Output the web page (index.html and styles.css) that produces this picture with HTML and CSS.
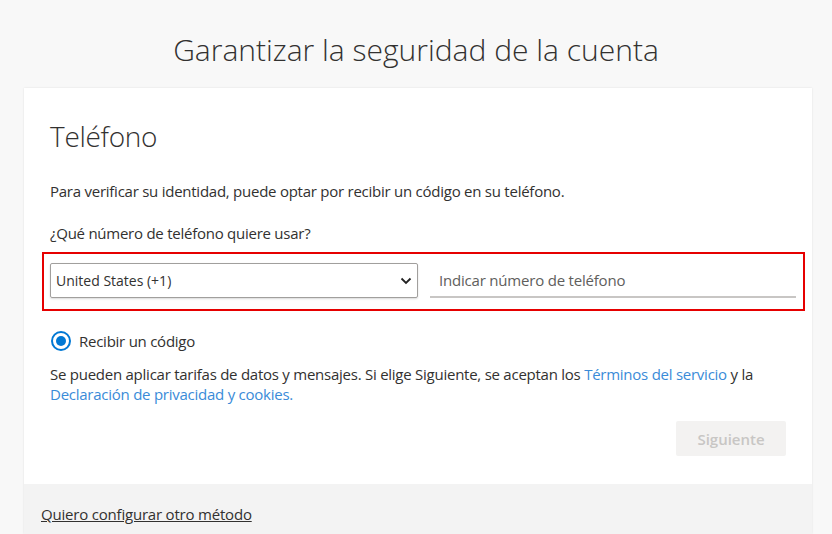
FILE: index.html
```html
<!DOCTYPE html>
<html lang="es">
<head>
<meta charset="utf-8">
<title>Garantizar la seguridad de la cuenta</title>
<link rel="stylesheet" href="styles.css">
</head>
<body>
<h1 class="page-title">Garantizar la seguridad de la cuenta</h1>
<div class="card">
  <div class="card-body">
    <h2 class="section-title">Teléfono</h2>
    <p class="text intro">Para verificar su identidad, puede optar por recibir un código en su teléfono.</p>
    <p class="text question">¿Qué número de teléfono quiere usar?</p>
    <div class="phone-row">
      <div class="select">
        <span>United States (+1)</span>
        <svg class="chevron" width="12" height="8" viewBox="0 0 12 8"><path d="M1.5 1.5 L6 6 L10.5 1.5" fill="none" stroke="#222" stroke-width="1.8"/></svg>
      </div>
      <div class="phone-input">Indicar número de teléfono</div>
    </div>
    <label class="radio-row">
      <span class="radio"><span class="radio-dot"></span></span>
      <span class="text">Recibir un código</span>
    </label>
    <p class="text legal">Se pueden aplicar tarifas de datos y mensajes. Si elige Siguiente, se aceptan los <a class="link">Términos del servicio</a> y la <a class="link">Declaración de privacidad y cookies.</a></p>
    <div class="actions">
      <button class="btn-next" disabled>Siguiente</button>
    </div>
  </div>
  <div class="card-footer">
    <a class="footer-link">Quiero configurar otro método</a>
  </div>
</div>
</body>
</html>
```

FILE: styles.css
```css
html, body {
  margin: 0;
  padding: 0;
  height: 100%;
  overflow: hidden;
}
body {
  background: #f8f8f8;
  font-family: "Open Sans", "Noto Sans", sans-serif;
  color: #333;
}
.page-title {
  margin: 0;
  padding-top: 30px;
  height: 88px;
  box-sizing: border-box;
  text-align: center;
  font-size: 30px;
  font-weight: 300;
  line-height: 40px;
  color: #323130;
  letter-spacing: 0;
}
.card {
  margin-left: 24px;
  width: 788px;
  background: #fff;
  box-shadow: 0 0 2px rgba(0,0,0,0.1);
}
.card-body {
  padding: 28px 26px 28px 26px;
}
.section-title {
  margin: 0;
  font-size: 28px;
  font-weight: 300;
  line-height: 40px;
  color: #323130;
  letter-spacing: -0.3px;
}
.text {
  font-size: 15px;
  line-height: 20px;
  color: #323130;
  letter-spacing: -0.25px;
}
p.text { margin: 0; }
.intro { margin-top: 25px !important; }
.question { margin-top: 22px !important; }
.phone-row {
  margin: 9px -19px 0 -8px;
  padding: 9px 7px 11px 6px;
  border: 2px solid #e60000;
  display: flex;
  gap: 12px;
  align-items: flex-start;
}
.select {
  width: 368px;
  height: 35px;
  box-sizing: border-box;
  border: 1px solid #a19f9d;
  border-radius: 2px;
  box-shadow: 0 1px 2px rgba(0,0,0,0.15);
  display: flex;
  align-items: center;
  justify-content: space-between;
  padding: 0 5px 0 5px;
  font-size: 14px;
  color: #323130;
  letter-spacing: 0;
}
.chevron { display: block; margin-top: 1px; }
.phone-input {
  flex: 1;
  height: 35px;
  box-sizing: border-box;
  border-bottom: 2px solid #c8c6c4;
  padding: 7px 9px 0 9px;
  font-size: 15px;
  color: #605e5c;
  letter-spacing: -0.2px;
  line-height: 20px;
}
.radio-row {
  display: flex;
  align-items: center;
  gap: 8px;
  margin-top: 20px;
}
.radio {
  width: 20px;
  height: 20px;
  box-sizing: border-box;
  border: 2px solid #0078d4;
  border-radius: 50%;
  display: flex;
  align-items: center;
  justify-content: center;
  margin-left: 1px;
}
.radio-dot {
  width: 10px;
  height: 10px;
  border-radius: 50%;
  background: #0078d4;
}
.legal { margin-top: 13px !important; }
.link {
  color: #3a8bd8;
  text-decoration: none;
}
.actions {
  display: flex;
  justify-content: flex-end;
  margin-top: 17px;
}
.btn-next {
  width: 110px;
  height: 35px;
  border: none;
  background: #f3f2f1;
  color: #c8c6c4;
  font-family: "Open Sans", "Noto Sans", sans-serif;
  font-size: 15px;
  font-weight: 600;
  border-radius: 2px;
}
.card-footer {
  background: #f3f3f3;
  padding: 19px 17px 9px 17px;
}
.footer-link {
  font-size: 15px;
  line-height: 20px;
  color: #323130;
  text-decoration: underline;
  letter-spacing: -0.2px;
}
```
